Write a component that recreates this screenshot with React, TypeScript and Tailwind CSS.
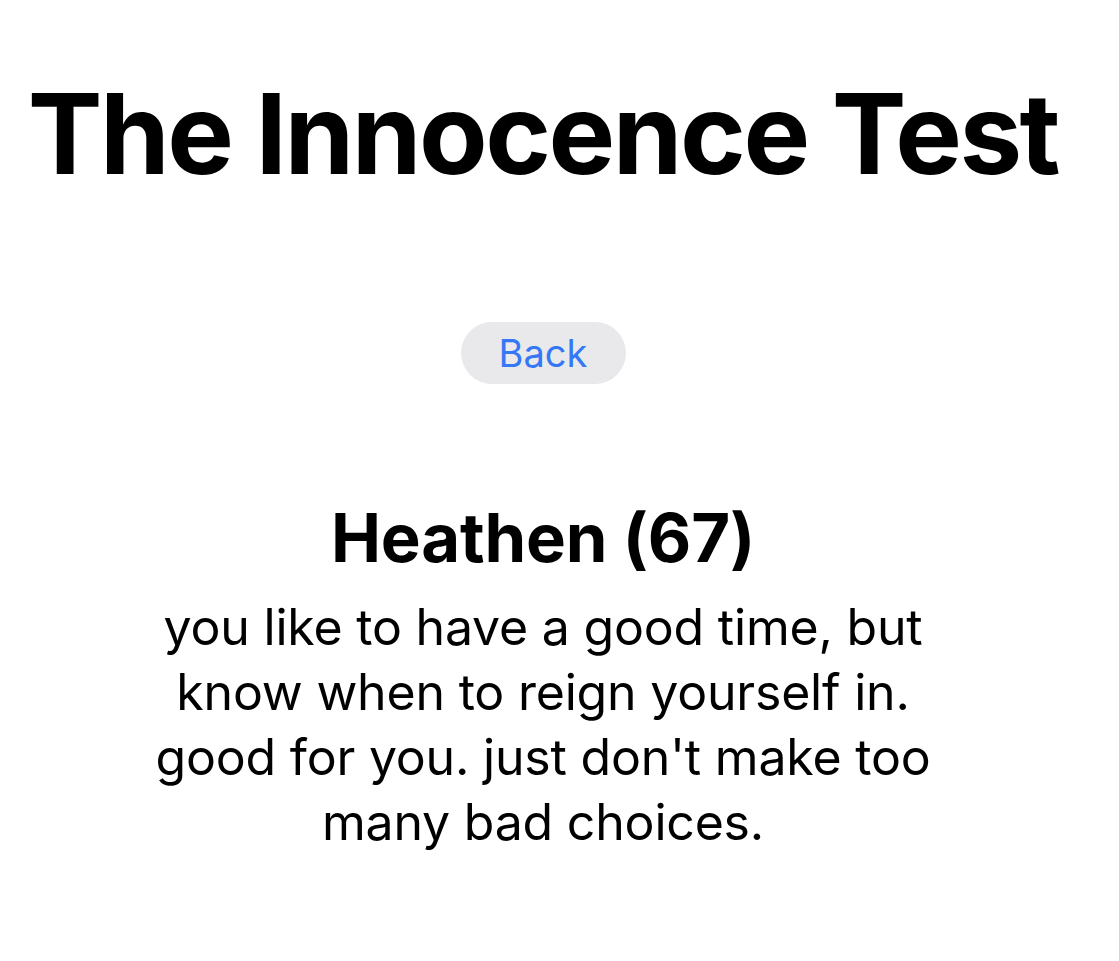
import React from 'react';

const App = () => {
  return (
    <div className="min-h-[961px] w-[1119px] pr-[33px] bg-white text-black flex flex-col items-center" style={{ fontFamily: 'Inter, "Noto Sans", sans-serif' }}>
      <h1 className="mt-[63px] text-[112px] leading-[140px] font-bold tracking-[-2.5px] whitespace-nowrap">
        The Innocence Test
      </h1>
      <button className="mt-[119px] h-[62px] w-[165px] rounded-full bg-[#e9e9eb] text-[#3478f6] text-[38px] leading-none">
        Back
      </button>
      <h2 className="mt-[112px] text-[67px] leading-[84px] font-bold tracking-[-0.2px]">
        Heathen (67)
      </h2>
      <p className="mt-[15px] w-[830px] text-center text-[50px] leading-[65px] tracking-[-0.2px]">
        you like to have a good time, but know when to reign yourself in. good for you. just don't make too many bad choices.
      </p>
    </div>
  );
};

export default App;
